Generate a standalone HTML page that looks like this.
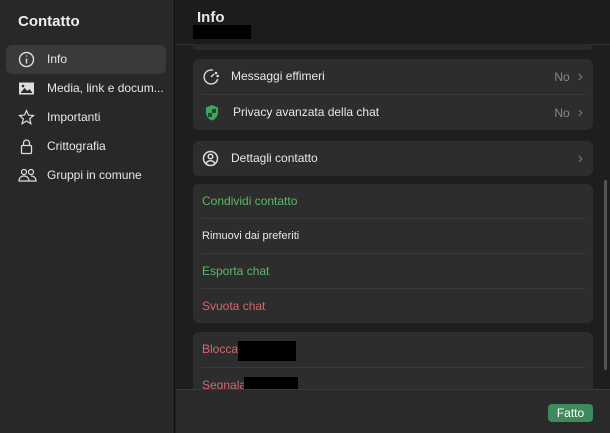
<!DOCTYPE html>
<html><head><style>
*{margin:0;padding:0;box-sizing:border-box}
body{width:610px;height:433px;overflow:hidden;background:#1f1f1f;font-family:"Liberation Sans",sans-serif;color:#e8e8e8;position:relative}
.side{position:absolute;left:0;top:0;width:175px;height:433px;background:#282828;border-right:1px solid #111}
.side h1{position:absolute;left:18px;top:13px;font-size:15px;font-weight:bold;color:#eee}
.it{position:absolute;left:6px;width:160px;height:29px;border-radius:6px;font-size:12px;line-height:29px;padding-left:41px}
.it svg{position:absolute;left:12px;top:6px}
.sel{background:#3a3a3a}
.main{position:absolute;left:176px;top:0;right:0;bottom:0;background:#1e1e1e}
.hdr{position:absolute;left:0;top:0;right:0;height:45px;background:#1c1c1c;border-bottom:1px solid #333}
.hdr b{position:absolute;left:21px;top:9px;font-size:15px}
.blk{position:absolute;background:#000}
.card{position:absolute;left:17px;width:400px;background:#2d2d2d;border-radius:6px}
.row{position:relative;height:35px;font-size:12px;line-height:35px;padding-left:38px}
.c3 .row{height:34px;line-height:34px}
.row .r{position:absolute;right:10px;top:0;color:#888;font-size:12px}
.row .r i{font-style:normal;font-size:16px;color:#777;margin-left:8px}
.sep{border-top:1px solid #3a3a3a;margin-left:8px;margin-right:8px}
.t{padding-left:9px}
.g{color:#5cb86a}.red{color:#d9646c}
.foot{position:absolute;left:0;right:0;top:389px;bottom:0;background:#2a2a2a;border-top:1px solid #3a3a3a}
.btn{position:absolute;right:17px;top:14px;width:45px;height:18px;background:#3f8a5c;border-radius:4px;color:#fff;font-size:12px;text-align:center;line-height:18px}
</style></head><body>
<div class="side">
<h1>Contatto</h1>
<div class="it sel" style="top:45px"><svg width="17" height="17" viewBox="0 0 17 17" fill="none" stroke="#ddd" stroke-width="1.4"><circle cx="8.5" cy="8.5" r="7"/><path d="M8.5 7.5v5M8.5 4.5v1"/></svg>Info</div>
<div class="it" style="top:74px"><svg width="17" height="17" viewBox="0 0 17 17"><rect x="1" y="2.5" width="15" height="12" fill="#ddd"/><path d="M2.5 13l4-5 3 3 2-2 3 4z" fill="#282828"/><circle cx="5" cy="6" r="1.3" fill="#282828"/></svg>Media, link e docum...</div>
<div class="it" style="top:103px"><svg width="17" height="17" viewBox="0 0 17 17" fill="none" stroke="#ddd" stroke-width="1.2"><path d="M8.5 1.5l2 4.6 5 .4-3.8 3.3 1.2 4.9-4.4-2.7-4.4 2.7 1.2-4.9L1.5 6.5l5-.4z"/></svg>Importanti</div>
<div class="it" style="top:132px"><svg width="17" height="17" viewBox="0 0 17 17" fill="none" stroke="#ddd" stroke-width="1.3"><rect x="3.5" y="7.5" width="10" height="8" rx="1"/><path d="M5.5 7.5V5a3 3 0 016 0v2.5"/></svg>Crittografia</div>
<div class="it" style="top:161px"><svg width="19" height="17" viewBox="0 0 19 17" fill="none" stroke="#ddd" stroke-width="1.2"><circle cx="6" cy="5" r="2.5"/><circle cx="13" cy="5" r="2.5"/><path d="M1 14c0-3 2-5 5-5s5 2 5 5zM10 14h8c0-3-2-5-5-5"/></svg>Gruppi in comune</div>
</div>
<div class="main">
<div class="hdr"><b>Info</b><div class="blk" style="left:17px;top:25px;width:58px;height:14px"></div></div>
<div class="card" style="top:44px;height:6px;background:#2a2a2a"></div>
<div class="card" style="top:59px">
<div class="row"><svg style="position:absolute;left:9px;top:9px" width="18" height="18" viewBox="0 0 18 18" fill="none" stroke="#ddd" stroke-width="1.4"><path d="M11 2.2A7 7 0 1 0 15.8 11"/><path d="M9 9l3-3" /><circle cx="14" cy="5" r=".6" fill="#ddd"/><circle cx="15.7" cy="8" r=".6" fill="#ddd"/></svg>Messaggi effimeri<span class="r">No<i>›</i></span></div>
<div class="sep"></div>
<div class="row"><svg style="position:absolute;left:11px;top:9px" width="16" height="18" viewBox="0 0 16 18"><path d="M8 1l6 2.5v5c0 4-3 7-6 8-3-1-6-4-6-8v-5z" fill="#3ca65a"/><path d="M8 5h4v4H8zM4 9h4v4H4z" fill="#1d4a2a"/></svg><span style="margin-left:2px">Privacy avanzata della chat</span><span class="r">No<i>›</i></span></div>
</div>
<div class="card" style="top:141px"><div class="row"><svg style="position:absolute;left:9px;top:9px" width="17" height="17" viewBox="0 0 17 17" fill="none" stroke="#ddd" stroke-width="1.5"><circle cx="8.5" cy="8.5" r="7"/><circle cx="8.5" cy="6.5" r="2.3"/><path d="M4 13.5c1-2 3-2.8 4.5-2.8s3.5.8 4.5 2.8"/></svg>Dettagli contatto<span class="r"><i>›</i></span></div></div>
<div class="card c3" style="top:184px">
<div class="row t g">Condividi contatto</div><div class="sep"></div>
<div class="row t" style="font-size:11px">Rimuovi dai preferiti</div><div class="sep"></div>
<div class="row t g">Esporta chat</div><div class="sep"></div>
<div class="row t red">Svuota chat</div>
</div>
<div class="card" style="top:332px;height:70px">
<div class="row t red">Blocca</div><div class="sep"></div>
<div class="row t red">Segnala</div>
<div class="blk" style="left:45px;top:9px;width:58px;height:20px"></div>
<div class="blk" style="left:51px;top:45px;width:54px;height:12px"></div>
</div>
<div style="position:absolute;right:3px;top:180px;width:3px;height:190px;background:#555;border-radius:2px"></div>
<div class="foot"><div class="btn">Fatto</div></div>
</div>
</body></html>
